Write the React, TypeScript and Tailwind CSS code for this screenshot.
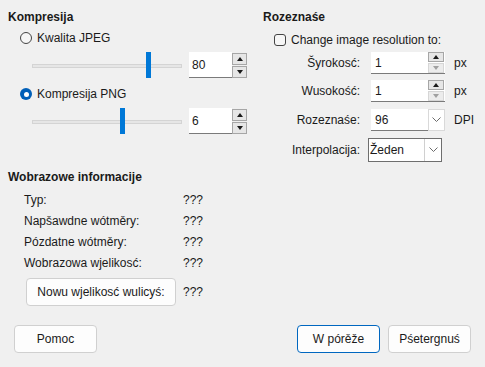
import React from "react";

// Small spin button pair used by the numeric fields
const SpinButtons = ({ downDisabled = false, tall = false }: { downDisabled?: boolean; tall?: boolean }) => (
  <div className={`flex flex-col justify-center gap-[1px] ${tall ? "w-[16px]" : "w-[17px]"}`}>
    <div
      className={`flex items-center justify-center border border-[#a6a6a6] bg-[#e6e6e6] ${
        tall ? "h-[12px] w-[15px]" : "h-[10px] w-[16px]"
      }`}
    >
      <div className="h-0 w-0 border-x-[3.5px] border-b-[4px] border-x-transparent border-b-[#1a1a1a]" />
    </div>
    <div
      className={`flex items-center justify-center border ${
        downDisabled ? "border-[#d6d6d6] bg-[#ececec]" : "border-[#a6a6a6] bg-[#e6e6e6]"
      } ${tall ? "h-[12px] w-[15px]" : "h-[10px] w-[16px]"}`}
    >
      <div
        className={`h-0 w-0 border-x-[3.5px] border-t-[4px] border-x-transparent ${
          downDisabled ? "border-t-[#a0a0a0]" : "border-t-[#1a1a1a]"
        }`}
      />
    </div>
  </div>
);

const Chevron = () => (
  <svg width="9" height="6" viewBox="0 0 9 6" fill="none">
    <path d="M0.5 0.5 L4.5 4.5 L8.5 0.5" stroke="#6b6b6b" strokeWidth="1" />
  </svg>
);

const SliderRow = ({ value, thumb }: { value: string; thumb: number }) => (
  <div className="mt-[4px] flex h-[26px] items-center pl-[24px]">
    <div className="relative h-[26px] w-[150px]">
      <div className="absolute left-0 right-0 top-[12px] h-[4px] border border-[#d4d4d4] bg-[#e6e6e6]" />
      <div className="absolute top-0 h-[26px] w-[5px] bg-[#0078d7]" style={{ left: thumb }} />
    </div>
    <div className="ml-[7px] flex h-[26px] w-[43px] items-center border-b border-[#7a7a7a] bg-white pl-[3px]">
      {value}
    </div>
    <SpinButtons tall />
  </div>
);

const Radio = ({ checked, label }: { checked: boolean; label: string }) => (
  <div className="flex h-[20px] items-center pl-[12px]">
    {checked ? (
      <div className="flex h-[12px] w-[12px] items-center justify-center rounded-full bg-[#005fb8]">
        <div className="h-[5px] w-[5px] rounded-full bg-white" />
      </div>
    ) : (
      <div className="h-[12px] w-[12px] rounded-full border border-[#444] bg-[#f6f6f6]" />
    )}
    <span className="ml-[5px]">{label}</span>
  </div>
);

const FieldRow = ({
  label,
  value,
  unit,
  kind,
  mt,
}: {
  label: string;
  value: string;
  unit?: string;
  kind: "spin" | "combo" | "comboFocus";
  mt: string;
}) => (
  <div className={`flex items-center ${mt}`}>
    <div className="w-[97px] text-right">{label}</div>
    {kind === "comboFocus" ? (
      <div className="ml-[8px] flex h-[24px] w-[74px] items-center border border-[#6e6e6e] bg-white">
        <div className="flex-1 pl-[1px]">{value}</div>
        <div className="flex h-full w-[17px] items-center justify-center border-l border-[#d0d0d0]">
          <Chevron />
        </div>
      </div>
    ) : kind === "spin" ? (
      <div className="ml-[11px] flex h-[22px] w-[74px] items-center border-b border-[#7a7a7a] bg-white">
        <div className="flex h-full w-[57px] items-center pl-[4px]">{value}</div>
        <SpinButtons downDisabled />
      </div>
    ) : (
      <div className="ml-[11px] flex h-[22px] w-[74px] items-center">
        <div className="flex h-full w-[57px] items-center border-b border-[#7a7a7a] bg-white pl-[4px]">
          {value}
        </div>
        <div className="flex h-full w-[17px] items-center justify-center border border-[#d9d9d9] bg-white">
          <Chevron />
        </div>
      </div>
    )}
    {unit && <span className="ml-[9px]">{unit}</span>}
  </div>
);

const InfoRow = ({ label }: { label: string }) => (
  <div className="flex h-[21px] items-center pl-[16px]">
    <div className="w-[159px]">{label}</div>
    <div>???</div>
  </div>
);

const DialogButton = ({ label, primary = false }: { label: string; primary?: boolean }) => (
  <div
    className={`flex h-[28px] w-[83px] items-center justify-center rounded-[4px] border bg-[#fdfdfd] ${
      primary ? "border-[#0067c0]" : "border-[#d0d0d0]"
    }`}
  >
    {label}
  </div>
);

export default function App() {
  return (
    <div className="relative h-[367px] w-[485px] overflow-hidden bg-[#f0f0f0] pt-[9px] font-['Segoe_UI','Liberation_Sans',sans-serif] text-[12px] leading-4 text-[#1a1a1a]">
      <div className="flex h-[153px] items-start">
        {/* Kompresija */}
        <div className="w-[263px] pl-[8px]">
          <div className="h-4 font-bold">Kompresija</div>
          <div className="mt-[3px]">
            <Radio checked={false} label="Kwalita JPEG" />
          </div>
          <SliderRow value="80" thumb={114} />
          <div className="mt-[6px]">
            <Radio checked label="Kompresija PNG" />
          </div>
          <SliderRow value="6" thumb={88} />
        </div>

        {/* Rozeznaśe */}
        <div className="flex-1">
          <div className="h-4 font-bold">Rozeznaśe</div>
          <div className="mt-[5px] flex h-[20px] items-center pl-[11px]">
            <div className="h-[12px] w-[12px] rounded-[3px] border border-[#444] bg-[#f6f6f6]" />
            <span className="ml-[5px]">Change image resolution to:</span>
          </div>
          <FieldRow label="Šyrokosć:" value="1" unit="px" kind="spin" mt="mt-[2px]" />
          <FieldRow label="Wusokość:" value="1" unit="px" kind="spin" mt="mt-[6px]" />
          <FieldRow label="Rozeznaśe:" value="96" unit="DPI" kind="combo" mt="mt-[7px]" />
          <FieldRow label="Interpolacija:" value="Žeden" kind="comboFocus" mt="mt-[7px]" />
        </div>
      </div>

      {/* Wobrazowe informacije */}
      <div className="mt-[7px] pl-[8px]">
        <div className="h-4 font-bold">Wobrazowe informacije</div>
        <div className="mt-[4px]">
          <InfoRow label="Typ:" />
          <InfoRow label="Napšawdne wótměry:" />
          <InfoRow label="Pózdatne wótměry:" />
          <InfoRow label="Wobrazowa wjelikosć:" />
        </div>
        <div className="mt-[5px] flex h-[28px] items-center pl-[18px]">
          <div className="flex h-[28px] w-[150px] items-center justify-center rounded-[4px] border border-[#d0d0d0] bg-[#fdfdfd]">
            Nowu wjelikosć wulicyś:
          </div>
          <span className="ml-[7px]">???</span>
        </div>
      </div>

      <div className="mt-[19px] flex items-center justify-between px-[14px]">
        <DialogButton label="Pomoc" />
        <div className="flex gap-[8px]">
          <DialogButton label="W pórěže" primary />
          <DialogButton label="Pśetergnuś" />
        </div>
      </div>
    </div>
  );
}
